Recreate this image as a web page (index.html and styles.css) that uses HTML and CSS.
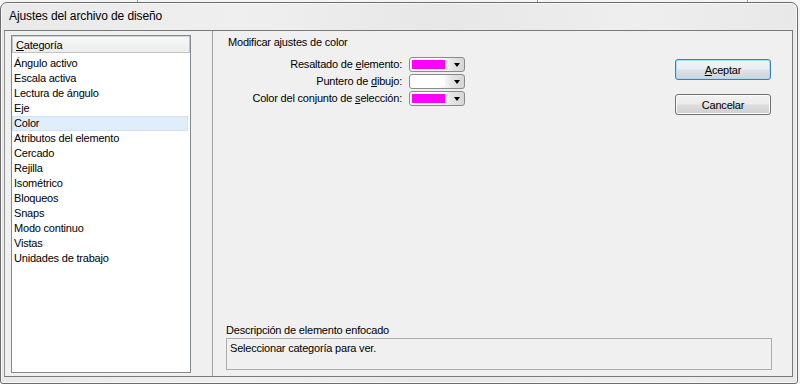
FILE: index.html
```html
<!DOCTYPE html>
<html lang="es">
<head>
<meta charset="utf-8">
<title>Ajustes del archivo de diseño</title>
<link rel="stylesheet" href="styles.css">
</head>
<body>
<div class="desk">
  <div class="behind"><span class="edge e1"></span><span class="edge e2"></span><span class="edge e3"></span></div>
  <div class="window">
    <div class="titlebar">Ajustes del archivo de diseño</div>
    <div class="client">
      <div class="list">
        <div class="list-head"><u>C</u>ategoría</div>
        <ul class="items">
          <li>Ángulo activo</li>
          <li>Escala activa</li>
          <li>Lectura de ángulo</li>
          <li>Eje</li>
          <li class="selected">Color</li>
          <li>Atributos del elemento</li>
          <li>Cercado</li>
          <li>Rejilla</li>
          <li>Isométrico</li>
          <li>Bloqueos</li>
          <li>Snaps</li>
          <li>Modo continuo</li>
          <li>Vistas</li>
          <li>Unidades de trabajo</li>
        </ul>
      </div>
      <div class="splitter"></div>
      <div class="panel">
        <div class="panel-top">
          <div class="settings">
            <div class="heading">Modificar ajustes de color</div>
            <div class="form">
              <label class="lbl">Resaltado de <u>e</u>lemento:</label>
              <div class="combo"><span class="swatch magenta"></span><span class="arrow"></span></div>
              <label class="lbl">Puntero de <u>d</u>ibujo:</label>
              <div class="combo"><span class="swatch white"></span><span class="arrow"></span></div>
              <label class="lbl">Color del conjunto de <u>s</u>elección:</label>
              <div class="combo"><span class="swatch magenta"></span><span class="arrow"></span></div>
            </div>
          </div>
          <div class="buttons">
            <button class="btn default"><u>A</u>ceptar</button>
            <button class="btn">Cancelar</button>
          </div>
        </div>
        <div class="desc">
          <div class="desc-label">Descripción de elemento enfocado</div>
          <div class="desc-box">Seleccionar categoría para ver.</div>
        </div>
      </div>
    </div>
  </div>
</div>
</body>
</html>
```
FILE: styles.css
```css
* { box-sizing: border-box; }
html, body { margin: 0; padding: 0; }
body {
  width: 800px;
  height: 384px;
  overflow: hidden;
  background: #f4f4f4;
  font-family: "Liberation Sans", Arial, sans-serif;
  font-size: 11px;
  letter-spacing: -0.2px;
  color: #000;
}
u { text-decoration: underline; text-underline-offset: 1px; }

.desk { width: 800px; height: 384px; display: flex; flex-direction: column; }

.behind { height: 2px; display: flex; }
.edge { width: 1px; background: #9a9a9a; }
.e1 { margin-left: 137px; }
.e2 { margin-left: 399px; }
.e3 { margin-left: 209px; }

.window {
  width: 798px;
  height: 382px;
  border: 1px solid #6c6c6c;
  border-radius: 7px 7px 3px 3px;
  background: linear-gradient(to right, #e9e9e9 0%, #efefef 30%, #e7e7e7 55%, #eeeeee 80%, #e8e8e8 100%);
  box-shadow: inset 0 0 0 1px #f8f8f8;
  padding: 0 4px 6px 3px;
  display: flex;
  flex-direction: column;
}

.titlebar {
  height: 27px;
  display: flex;
  align-items: center;
  padding-left: 5px;
  padding-bottom: 1px;
  font-size: 12px;
  letter-spacing: -0.1px;
}

.client {
  flex: 1;
  border: 1px solid #7a7a7a;
  border-left-color: #8f8f8f;
  background: #f0f0f0;
  display: flex;
}

.list {
  width: 180px;
  margin: 4px 0 3px 6px;
  border: 1px solid #828790;
  background: #fff;
  display: flex;
  flex-direction: column;
}
.list-head {
  height: 17px;
  line-height: 16px;
  padding-left: 3px;
  background: linear-gradient(#f7f7f7, #ececec);
  border: 1px solid #c2c2c2;
  border-top-color: #d5d5d5;
}
.items {
  list-style: none;
  margin: 3px 0 0;
  padding: 0;
}
.items li {
  height: 15px;
  line-height: 15px;
  padding-left: 2px;
  margin-right: 2px;
  white-space: nowrap;
}
.items li.selected {
  background: #e0eefb;
  box-shadow: inset 0 0 0 1px #cfe3f6;
}

.splitter {
  width: 1px;
  margin-left: 21px;
  background: #a0a0a0;
}

.panel {
  flex: 1;
  display: flex;
  flex-direction: column;
}
.panel-top { display: flex; flex: 1; }
.settings { flex: 1; padding-left: 15px; padding-top: 4px; }
.heading { line-height: 15px; }

.form {
  margin-top: 7px;
  display: grid;
  grid-template-columns: 174px 56px;
  column-gap: 7px;
  row-gap: 2px;
  align-items: center;
}
.lbl { text-align: right; line-height: 15px; white-space: nowrap; }

.combo {
  height: 15px;
  border: 1px solid #8a8a8a;
  border-radius: 3px;
  background: linear-gradient(to right, #ffffff 0%, #ffffff 58%, #e4e4e4 78%, #d6d6d6 100%);
  display: flex;
  align-items: center;
  padding-left: 2px;
}
.swatch { width: 33px; height: 9px; }
.swatch.magenta { background: #ff00ff; }
.swatch.white { background: #ffffff; }
.arrow {
  margin-left: 9px;
  width: 0; height: 0;
  border-left: 3.5px solid transparent;
  border-right: 3.5px solid transparent;
  border-top: 4px solid #000;
}

.buttons {
  width: 96px;
  margin-top: 28px;
  margin-right: 21px;
  display: flex;
  flex-direction: column;
  gap: 14px;
}
.btn {
  height: 21px;
  font-family: inherit;
  font-size: 11px;
  letter-spacing: -0.2px;
  color: #000;
  border: 1px solid #707070;
  border-radius: 3px;
  background: linear-gradient(#f2f2f2 0%, #ebebeb 48%, #dddddd 52%, #cfcfcf 100%);
  box-shadow: inset 0 0 0 1px #fbfbfb;
  padding: 0;
}
.btn.default {
  border-color: #3c7fb1;
  box-shadow: inset 0 0 0 1px #a9dcf6;
  background: linear-gradient(#f0f5f8 0%, #e9eef2 48%, #dbe1e6 52%, #cfd6dc 100%);
}

.desc {
  margin-left: 13px;
  margin-right: 20px;
  margin-bottom: 6px;
}
.desc-label { line-height: 16px; }
.desc-box {
  height: 32px;
  border: 1px solid #acacac;
  padding: 2px 3px;
  line-height: 15px;
}
```
